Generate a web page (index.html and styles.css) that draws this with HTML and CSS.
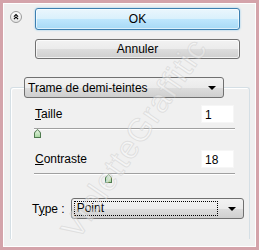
FILE: index.html
```html
<!DOCTYPE html>
<html lang="fr">
<head>
  <meta charset="UTF-8" />
  <title>Trame de demi-teintes</title>
  <link rel="stylesheet" href="styles.css">
</head>
<body>
  <div class="cadre">
    <div class="interieur">

      <div class="haut">
        <button class="replier" title="Replier">
          <svg width="12" height="12" viewBox="0 0 12 12">
            <path d="M3.5 5.5 L6 3 L8.5 5.5 M3.5 8.5 L6 6 L8.5 8.5" fill="none" stroke="#000" stroke-width="1.3"/>
          </svg>
        </button>
        <div class="actions">
          <button class="btn btn-ok">OK</button>
          <button class="btn">Annuler</button>
        </div>
      </div>

      <div class="groupe">
        <div class="liste liste-titre">
          <span>Trame de demi-teintes</span>
          <span class="fleche"></span>
        </div>

        <div class="ligne">
          <label><u>T</u>aille</label>
          <div class="valeur">1</div>
        </div>
        <div class="curseur">
          <div class="piste"></div>
          <span class="poignee" style="left: 0px"></span>
        </div>

        <div class="ligne">
          <label><u>C</u>ontraste</label>
          <div class="valeur">18</div>
        </div>
        <div class="curseur">
          <div class="piste"></div>
          <span class="poignee" style="left: 71px"></span>
        </div>

        <div class="ligne-type">
          <label>T<u>y</u>pe :</label>
          <div class="liste liste-type">
            <span class="focus">Point</span>
            <span class="fleche"></span>
          </div>
        </div>
      </div>

      <div class="filigrane">VioletteGraffitic</div>
    </div>
  </div>
</body>
</html>
```

FILE: styles.css
```css
* {
  margin: 0;
  padding: 0;
  box-sizing: border-box;
  font-family: 'Liberation Sans', Arial, sans-serif;
}

body {
  background-color: #f0f0f0;
}

.cadre {
  width: 259px;
  height: 250px;
  border: 3px solid #d4a3aa;
  background-color: #f0f0f0;
}

.interieur {
  position: relative;
  height: 100%;
  border: 1px solid #ffffff;
  overflow: hidden;
}

/* boutons du haut */
.haut {
  display: flex;
  padding: 4px 0 0 6px;
}

.replier {
  width: 12px;
  height: 12px;
  margin-top: 3px;
  border: 1px solid #9c9c9c;
  border-radius: 50%;
  background: linear-gradient(#ffffff, #e4e4e4);
  display: flex;
  align-items: center;
  justify-content: center;
}

.actions {
  display: flex;
  flex-direction: column;
  gap: 9px;
  width: 205px;
  margin-left: 13px;
}

.btn {
  height: 20px;
  font-size: 12px;
  color: #000;
  border: 1px solid #707070;
  border-radius: 3px;
  background: linear-gradient(#f2f2f2 0%, #ebebeb 50%, #dddddd 51%, #cfcfcf 100%);
  box-shadow: inset 0 0 0 1px rgba(255,255,255,0.7);
}

.btn-ok {
  height: 22px;
  border-color: #3c7fb1;
  background: linear-gradient(#eaf6fd 0%, #d9f0fc 50%, #bee6fd 51%, #a7d9f5 100%);
  box-shadow: inset 0 0 0 1px rgba(255,255,255,0.6), 0 0 2px #7fc6ee;
}

/* cadre de groupe */
.groupe {
  position: relative;
  margin: 28px 5px 0 6px;
  height: 152px;
  border: 1px solid #d5dfe5;
  border-bottom: none;
  border-radius: 3px 3px 0 0;
  box-shadow: inset 1px 1px 0 #ffffff;
}

.liste {
  display: flex;
  align-items: center;
  justify-content: space-between;
  height: 21px;
  font-size: 12px;
  border: 1px solid #707070;
  border-radius: 3px;
  background: linear-gradient(#f2f2f2 0%, #ebebeb 50%, #dddddd 51%, #cfcfcf 100%);
}

.liste-titre {
  width: 200px;
  margin: -11px 0 0 13px;
  padding: 0 6px 0 3px;
}

.fleche {
  width: 0;
  height: 0;
  border-left: 4px solid transparent;
  border-right: 4px solid transparent;
  border-top: 4px solid #000;
  margin-right: 1px;
}

.ligne {
  display: flex;
  justify-content: space-between;
  align-items: center;
  padding: 0 15px 0 24px;
  margin-top: 7px;
  font-size: 12px;
}

.ligne + .curseur + .ligne {
  margin-top: 8px;
}

.valeur {
  width: 33px;
  height: 18px;
  padding: 2px 0 0 3px;
  background-color: #ffffff;
  border: 1px solid #f6f6f6;
  font-size: 12px;
}

.curseur {
  position: relative;
  height: 14px;
  margin: 0 14px 0 23px;
}

.piste {
  margin-top: 5px;
  height: 2px;
  border-top: 1px solid #a0a0a0;
  border-bottom: 1px solid #ffffff;
}

.poignee {
  position: absolute;
  top: 1px;
  width: 7px;
  height: 9px;
  background-color: #4f7a4f;
  clip-path: polygon(50% 0, 100% 40%, 100% 100%, 0 100%, 0 40%);
}

.poignee::after {
  content: "";
  position: absolute;
  inset: 1px;
  background: linear-gradient(#e8f5e4, #a9d7a2);
  clip-path: polygon(50% 0, 100% 40%, 100% 100%, 0 100%, 0 40%);
}

.ligne-type {
  display: flex;
  align-items: center;
  margin-top: 11px;
  padding-left: 21px;
  font-size: 12px;
}

.liste-type {
  width: 173px;
  margin-left: 6px;
  padding: 2px 6px 2px 2px;
}

.focus {
  flex: 1;
  height: 15px;
  margin-right: 10px;
  padding-left: 2px;
  border: 1px dotted #000;
  line-height: 13px;
}

/* filigrane */
.filigrane {
  position: absolute;
  left: 14px;
  top: 116px;
  font-size: 32px;
  letter-spacing: 1px;
  color: rgba(255, 255, 255, 0.35);
  -webkit-text-stroke: 1px rgba(200, 200, 200, 0.45);
  transform: rotate(-56deg);
  pointer-events: none;
}
```
